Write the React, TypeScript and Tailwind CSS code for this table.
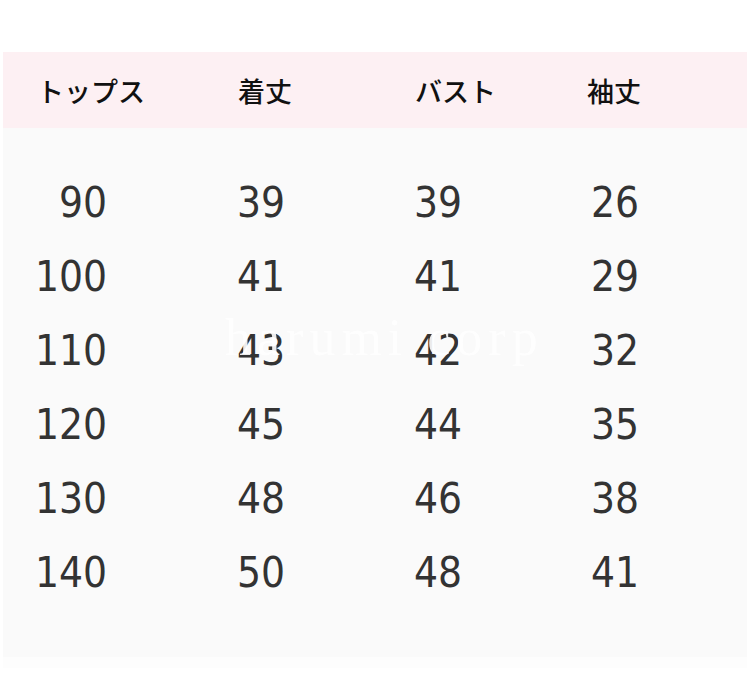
const rows = [
  [" 90", "39", "39", "26"],
  ["100", "41", "41", "29"],
  ["110", "43", "42", "32"],
  ["120", "45", "44", "35"],
  ["130", "48", "46", "38"],
  ["140", "50", "48", "41"],
];

const headers = ["トップス", "着丈", "バスト", "袖丈"];

export default function App() {
  return (
    <div className="relative w-[750px] h-[693px] bg-white pt-[52px] px-[3px]">
      {/* header band */}
      <div
        className="h-[76px] bg-[#fdf0f3] grid grid-cols-[235px_177px_172px_1fr] items-center text-[27px] font-medium text-[#111] pb-[1px]"
        style={{ fontFamily: '"Noto Sans CJK JP", "Noto Sans", sans-serif' }}
      >
        <div className="pl-[34px] pt-[3px]">{headers[0]}</div>
        <div className="pt-[3px]">{headers[1]}</div>
        <div className="pt-[3px]">{headers[2]}</div>
        <div className="pt-[3px]">{headers[3]}</div>
      </div>

      {/* size rows */}
      <div
        className="h-[529px] bg-[#fafafa] pt-[38px] text-[42px] text-[#333]"
        style={{ fontFamily: '"DejaVu Sans Condensed", "DejaVu Sans", sans-serif', fontStretch: "condensed" }}
      >
        {rows.map((r) => (
          <div key={r[0]} className="h-[74px] grid grid-cols-[234px_177px_177px_1fr] items-center leading-none">
            <div className="w-[104px] text-right whitespace-pre">{r[0]}</div>
            <div>{r[1]}</div>
            <div>{r[2]}</div>
            <div>{r[3]}</div>
          </div>
        ))}
      </div>
      <div className="h-[11px] bg-[#fdfdfd]" />

      {/* watermark */}
      <div
        className="absolute left-[225px] top-[312px] text-[52px] text-white tracking-[6px] leading-none opacity-90"
        style={{ fontFamily: '"Liberation Serif", serif' }}
      >
        harumi corp
      </div>
    </div>
  );
}
